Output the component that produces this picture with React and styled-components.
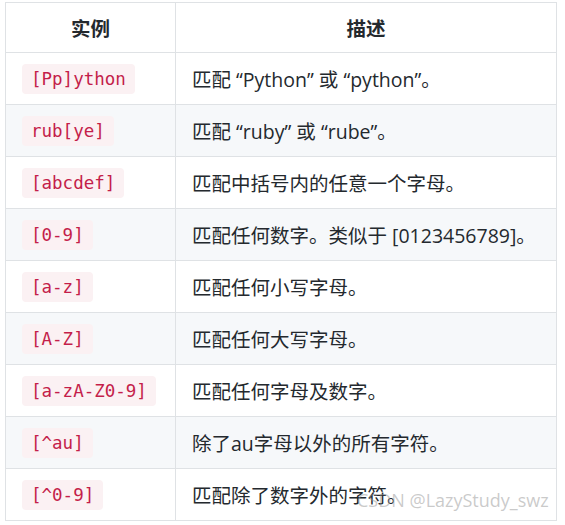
import React from "react";
import styled, { createGlobalStyle } from "styled-components";

const Global = createGlobalStyle`
  html, body { margin: 0; padding: 0; background: #ffffff; }
  body { font-family: "Open Sans", "Noto Sans CJK SC", sans-serif; }
`;

const Page = styled.div`
  position: relative;
  width: 565px;
  height: 525px;
  padding: 2px 0 0 5px;
  box-sizing: border-box;
  overflow: hidden;
`;

const Table = styled.table`
  border-collapse: collapse;
  width: 551px;
  table-layout: fixed;
  color: #24292e;
`;

const Col = styled.col`
  width: ${(p) => p.$w}px;
`;

const Row = styled.tr`
  background: ${(p) => (p.$alt ? "#f6f8fa" : "#ffffff")};
  border-top: 1px solid #d5d9de;
`;

const Head = styled.th`
  height: 49px;
  padding: 0;
  border: 1px solid #dfe2e5;
  font-family: "Noto Sans CJK SC", sans-serif;
  font-size: 19.5px;
  font-weight: 700;
  text-align: center;
  color: #24292e;
`;

const Cell = styled.td`
  height: 51px;
  padding: 0 16px;
  border: 1px solid #dfe2e5;
  font-family: "Open Sans", "Noto Sans CJK SC", sans-serif;
  font-size: 19.5px;
  color: #24292e;
  white-space: nowrap;
  vertical-align: middle;
`;

const Code = styled.code`
  display: inline-block;
  padding: 3px 9px;
  border-radius: 4px;
  background: #fbf1f3;
  color: #c41e4a;
  font-family: "DejaVu Sans Mono", "Liberation Mono", monospace;
  font-size: 17.5px;
  line-height: 24px;
`;

const Watermark = styled.div`
  position: absolute;
  left: 357px;
  top: 488px;
  font-family: "Open Sans", "Noto Sans CJK SC", sans-serif;
  font-size: 18px;
  color: rgba(150, 150, 150, 0.5);
  white-space: nowrap;
  pointer-events: none;
`;

const rows = [
  ["[Pp]ython", "匹配 “Python” 或 “python”。"],
  ["rub[ye]", "匹配 “ruby” 或 “rube”。"],
  ["[abcdef]", "匹配中括号内的任意一个字母。"],
  ["[0-9]", "匹配任何数字。类似于 [0123456789]。"],
  ["[a-z]", "匹配任何小写字母。"],
  ["[A-Z]", "匹配任何大写字母。"],
  ["[a-zA-Z0-9]", "匹配任何字母及数字。"],
  ["[^au]", "除了au字母以外的所有字符。"],
  ["[^0-9]", "匹配除了数字外的字符。"],
];

export default function App() {
  return (
    <>
      <Global />
      <Page>
        <Table>
          <colgroup>
            <Col $w={170} />
            <Col $w={381} />
          </colgroup>
          <thead>
            <Row>
              <Head>实例</Head>
              <Head>描述</Head>
            </Row>
          </thead>
          <tbody>
            {rows.map(([c, d], i) => (
              <Row key={c} $alt={i % 2 === 1}>
                <Cell>
                  <Code>{c}</Code>
                </Cell>
                <Cell>{d}</Cell>
              </Row>
            ))}
          </tbody>
        </Table>
        <Watermark>CSDN @LazyStudy_swz</Watermark>
      </Page>
    </>
  );
}
